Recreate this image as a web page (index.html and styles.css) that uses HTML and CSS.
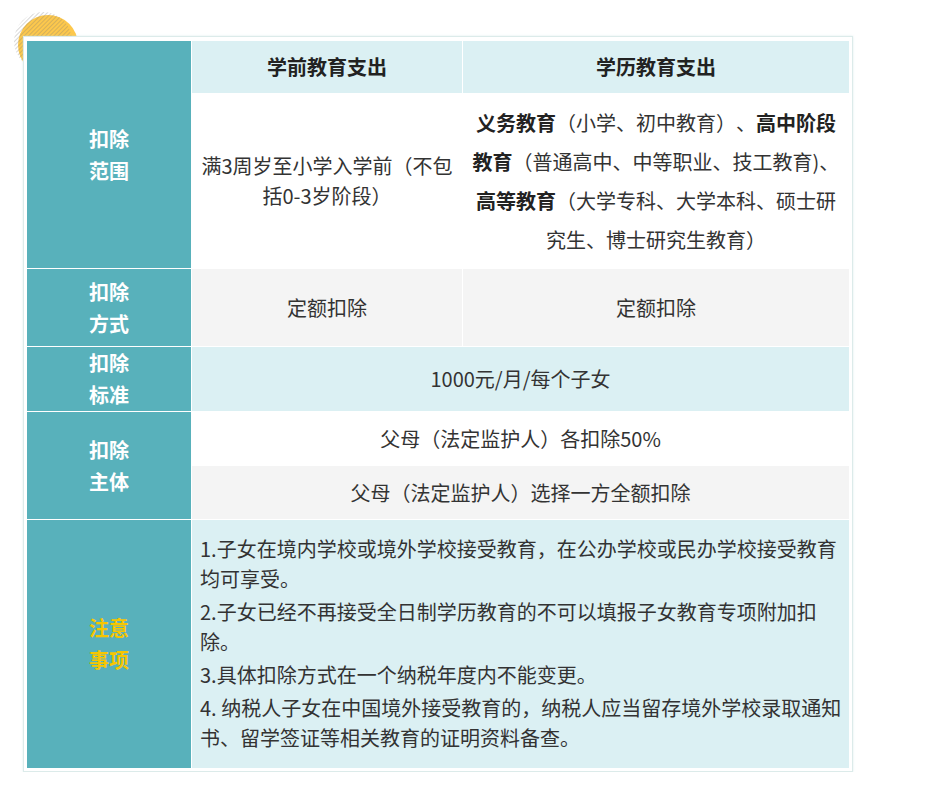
FILE: index.html
```html
<!DOCTYPE html>
<html lang="zh-CN">
<head>
<meta charset="utf-8">
<title>子女教育支出</title>
<link rel="stylesheet" href="styles.css">
</head>
<body>
<div class="page">
  <svg class="deco" width="90" height="80" viewBox="0 0 90 80" aria-hidden="true">
    <defs>
      <pattern id="hatch" width="3" height="3" patternUnits="userSpaceOnUse" patternTransform="rotate(45)">
        <line x1="0" y1="0" x2="0" y2="3" stroke="#7a7a7a" stroke-width="1"/>
      </pattern>
      <clipPath id="hc"><circle cx="43" cy="41" r="29"/></clipPath>
    </defs>
    <circle cx="48" cy="45" r="30" fill="#fdc84c"/>
    <rect x="0" y="0" width="90" height="80" fill="url(#hatch)" clip-path="url(#hc)" opacity="0.6"/>
  </svg>
  <div class="box">
    <div class="grid">
      <div class="cell side r12">扣除<br>范围</div>
      <div class="cell head">学前教育支出</div>
      <div class="cell head">学历教育支出</div>

      <div class="cell plain narrow">满3周岁至小学入学前（不包括0-3岁阶段）</div>
      <div class="cell plain wide"><p><b>义务教育</b>（小学、初中教育）、<b>高中阶段</b><br><b>教育</b>（普通高中、中等职业、技工教育)、<br><b>高等教育</b>（大学专科、大学本科、硕士研<br>究生、博士研究生教育）</p></div>

      <div class="cell side">扣除<br>方式</div>
      <div class="cell grey">定额扣除</div>
      <div class="cell grey">定额扣除</div>

      <div class="cell side">扣除<br>标准</div>
      <div class="cell tint span2">1000元/月/每个子女</div>

      <div class="cell side r56">扣除<br>主体</div>
      <div class="cell plain span2">父母（法定监护人）各扣除50%</div>
      <div class="cell grey span2">父母（法定监护人）选择一方全额扣除</div>

      <div class="cell side note-title">注意<br>事项</div>
      <div class="notes span2">
        <p>1.子女在境内学校或境外学校接受教育，在公办学校或民办学校接受教育均可享受。</p>
        <p>2.子女已经不再接受全日制学历教育的不可以填报子女教育专项附加扣除。</p>
        <p>3.具体扣除方式在一个纳税年度内不能变更。</p>
        <p>4. 纳税人子女在中国境外接受教育的，纳税人应当留存境外学校录取通知书、留学签证等相关教育的证明资料备查。</p>
      </div>
    </div>
  </div>
</div>
</body>
</html>
```

FILE: styles.css
```css
html, body {
  margin: 0;
  background: #ffffff;
}

body {
  font-family: "Noto Sans CJK SC", "Microsoft YaHei", "Noto Sans", sans-serif;
  color: #333333;
  font-size: 20px;
  text-spacing-trim: space-all;
}

.page {
  position: relative;
  padding: 36px 0 0 23px;
}

.deco {
  position: absolute;
  left: 0;
  top: 0;
}

.box {
  position: relative;
  width: 822px;
  border: 1px solid #dcebea;
  padding: 4px 3px 3px 3px;
  background: #ffffff;
  box-shadow: 0 0 2px rgba(200, 225, 225, 0.6);
}

.grid {
  display: grid;
  grid-template-columns: 164px 270px 386px;
  grid-template-rows: 52px 174px 77px 64px 53px 53px 248px;
  gap: 1px;
  background: #ffffff;
}

.cell {
  display: flex;
  align-items: center;
  justify-content: center;
  text-align: center;
  line-height: 30px;
}

.side {
  background: #58b1bb;
  color: #ffffff;
  font-weight: bold;
  line-height: 32px;
}

.r12 {
  grid-row: 1 / 3;
}

.r56 {
  grid-row: 5 / 7;
}

.note-title {
  color: #f7c600;
}

.head {
  background: #dbf0f3;
  color: #222222;
  font-weight: bold;
}

.plain {
  background: #ffffff;
}

.grey {
  background: #f4f4f4;
}

.tint {
  background: #dbf0f3;
}

.span2 {
  grid-column: 2 / 4;
}

.narrow {
  padding: 0 5px;
}

.wide {
  padding: 0 2px;
}

.wide p {
  margin: 0;
  line-height: 39px;
  white-space: nowrap;
}

.wide b {
  color: #222222;
}

.notes {
  background: #dbf0f3;
  padding: 14px 4px 0 8px;
  text-align: left;
  line-height: 30px;
}

.notes p {
  margin: 0 0 3px 0;
}
```
